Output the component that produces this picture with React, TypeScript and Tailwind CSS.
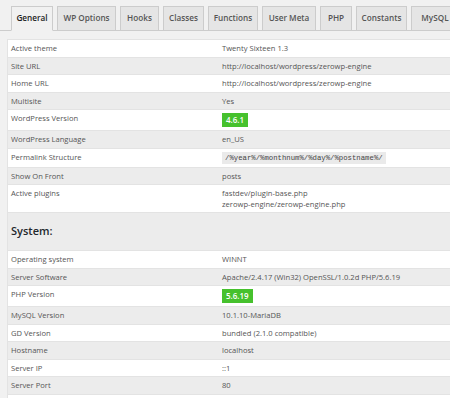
import React from "react";

const tabs: { label: string; w: string; active?: boolean }[] = [
  { label: "General", w: "w-[42px]", active: true },
  { label: "WP Options", w: "w-[59px]" },
  { label: "Hooks", w: "w-[39px]" },
  { label: "Classes", w: "w-[41px]" },
  { label: "Functions", w: "w-[50px]" },
  { label: "User Meta", w: "w-[54px]" },
  { label: "PHP", w: "w-[32px]" },
  { label: "Constants", w: "w-[51px]" },
  { label: "MySQL", w: "w-[48px]" },
];

type Row = { label: string; value: React.ReactNode };

const Badge = ({ children }: { children: React.ReactNode }) => (
  <span className="inline-block align-top bg-[#46c12d] text-white font-semibold px-[4px] leading-[14px] text-[8px]">
    {children}
  </span>
);

const general: Row[] = [
  { label: "Active theme", value: "Twenty Sixteen 1.3" },
  { label: "Site URL", value: "http://localhost/wordpress/zerowp-engine" },
  { label: "Home URL", value: "http://localhost/wordpress/zerowp-engine" },
  { label: "Multisite", value: "Yes" },
  { label: "WordPress Version", value: <Badge>4.6.1</Badge> },
  { label: "WordPress Language", value: "en_US" },
  {
    label: "Permalink Structure",
    value: (
      <span
        className="inline-block align-top bg-[#eaeaea] px-[3px] leading-[12px] text-[7.3px] text-[#444]"
        style={{ fontFamily: "'Liberation Mono', monospace" }}
      >
        /%year%/%monthnum%/%day%/%postname%/
      </span>
    ),
  },
  { label: "Show On Front", value: "posts" },
  {
    label: "Active plugins",
    value: (
      <div className="flex flex-col">
        <span>fastdev/plugin-base.php</span>
        <span>zerowp-engine/zerowp-engine.php</span>
      </div>
    ),
  },
];

const system: Row[] = [
  { label: "Operating system", value: "WINNT" },
  { label: "Server Software", value: "Apache/2.4.17 (Win32) OpenSSL/1.0.2d PHP/5.6.19" },
  { label: "PHP Version", value: <Badge>5.6.19</Badge> },
  { label: "MySQL Version", value: "10.1.10-MariaDB" },
  { label: "GD Version", value: "bundled (2.1.0 compatible)" },
  { label: "Hostname", value: "localhost" },
  { label: "Server IP", value: "::1" },
  { label: "Server Port", value: "80" },
];

function TableRow({ row, odd }: { row: Row; odd: boolean }) {
  return (
    <div
      className={`flex border-b border-[#e3e3e3] pt-[3px] pb-[3px] leading-[10.5px] ${
        odd ? "bg-[#ececec]" : "bg-white"
      }`}
    >
      <div className="w-[214px] shrink-0 pl-[3px]">{row.label}</div>
      <div className="flex-1">{row.value}</div>
    </div>
  );
}

export default function App() {
  return (
    <div
      className="w-[450px] h-[398px] overflow-hidden bg-[#f1f1f1] text-[#555] text-[7.6px]"
      style={{ fontFamily: "'Open Sans', 'Noto Sans', sans-serif" }}
    >
      <div className="flex items-end gap-[4px] pt-[6px] pl-[11px] border-b border-[#ccc] h-[31px]">
        {tabs.map((t) => (
          <div
            key={t.label}
            className={`${t.w} shrink-0 h-[25px] -mb-px flex items-center justify-center border border-[#ccc] font-semibold text-[8.2px] ${
              t.active ? "bg-[#f1f1f1] border-b-[#f1f1f1] text-[#222]" : "bg-[#e5e5e5] text-[#555]"
            }`}
          >
            {t.label}
          </div>
        ))}
      </div>
      <div className="ml-[7px] mt-[8px] w-[600px] border-t border-l border-[#e3e3e3]">
        {general.map((r, i) => (
          <TableRow key={r.label} row={r} odd={i % 2 === 1} />
        ))}
        <div className="bg-[#ececec] border-b border-[#e3e3e3] h-[38px] flex items-center pl-[3px] text-[11px] font-semibold text-[#23282d]">
          System:
        </div>
        {system.map((r, i) => (
          <TableRow key={r.label} row={r} odd={i % 2 === 1} />
        ))}
        <div className="bg-white h-[20px]" />
      </div>
    </div>
  );
}
